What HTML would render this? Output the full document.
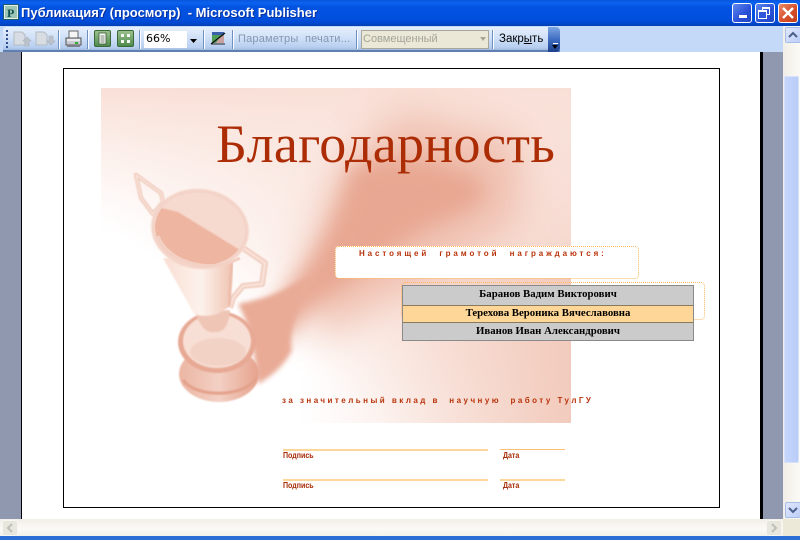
<!DOCTYPE html>
<html><head><meta charset="utf-8"><style>
html,body{margin:0;padding:0;width:800px;height:540px;overflow:hidden;background:#fff}
div,span{position:absolute;white-space:nowrap}
body{font-family:"Liberation Sans",sans-serif}
.sep{width:1px;height:19px;top:30px;background:#6f8fc0;border-right:1px solid #fff}
.sp{font-family:"Liberation Sans",sans-serif;font-weight:bold;color:#b8330a;font-size:8px}
.row{left:403px;width:290px;text-align:center;font:bold 10.8px "Liberation Serif",serif;color:#000}
.ln{background:#fdd699;height:2px}
.lb{font:bold 8px "Liberation Sans",sans-serif;color:#a62a05;transform-origin:0 0;transform:scaleX(.88)}
</style></head><body>
<!-- title bar -->
<div style="left:0;top:0;width:800px;height:26px;background:linear-gradient(#0a56dc 0,#0a63f0 3px,#0352e0 7px,#0150e0 18px,#0148d0 23px,#0240b0 26px)"></div>
<div style="left:4px;top:5px;width:12px;height:12px;background:#9cc4b4;border:1px solid #e4efe8;outline:1px solid #1d5a70"></div>
<div style="left:7px;top:6px;font:bold 12px 'Liberation Serif',serif;color:#11504f">P</div>
<div style="left:21px;top:5px;font:bold 13px 'Liberation Sans','DejaVu Sans',sans-serif;color:#fff;text-shadow:1px 1px #0a2f9a;white-space:pre">Публикация7 (просмотр)  - Microsoft Publisher</div>
<!-- window buttons -->
<div style="left:732px;top:3px;width:18px;height:18px;border:1px solid #fff;border-radius:3px;background:linear-gradient(135deg,#5f88ee,#2a50d8 60%,#2246c0)"></div>
<div style="left:739px;top:15px;width:8px;height:3px;background:#fff"></div>
<div style="left:755px;top:3px;width:18px;height:18px;border:1px solid #fff;border-radius:3px;background:linear-gradient(135deg,#5f88ee,#2a50d8 60%,#2246c0)"></div>
<div style="left:762px;top:7px;width:6px;height:5px;border:1px solid #fff;border-top-width:2px"></div>
<div style="left:758px;top:10px;width:7px;height:6px;border:1px solid #fff;border-top-width:2px;background:#2f56da"></div>
<div style="left:778px;top:3px;width:18px;height:18px;border:1px solid #fff;border-radius:3px;background:linear-gradient(135deg,#eb8a66,#d8502c 55%,#c04018)"></div>
<svg style="position:absolute;left:778px;top:3px" width="20" height="20"><path d="M5 5L15 15M15 5L5 15" stroke="#fff" stroke-width="2.4"/></svg>
<!-- toolbar band -->
<div style="left:0;top:26px;width:783px;height:26px;background:#c3d9f7"></div>
<div style="left:3px;top:27px;width:557px;height:25px;border-radius:3px 4px 4px 3px;background:linear-gradient(#e6effc,#d2e2f8 40%,#b8cff0 80%,#8fadd8)"></div>
<div style="left:3px;top:50px;width:557px;height:2px;background:#5f7fb0"></div>
<div style="left:6px;top:30px;width:2px;height:2px;background:#2f4f90;box-shadow:0 4px #2f4f90,0 8px #2f4f90,0 12px #2f4f90,0 16px #2f4f90"></div>
<!-- preview pages disabled -->
<svg style="position:absolute;left:12px;top:29px" width="50" height="20">
<path d="M2 3h8l3 3v10H2z" fill="#d8dde4" stroke="#b4bac4"/><path d="M13 17v-5h-2l4-4 4 4h-2v5z" fill="#bcc3cc" stroke="#a8afb8" stroke-width=".6"/>
<path d="M24 3h8l3 3v10H24z" fill="#d8dde4" stroke="#b4bac4"/><path d="M37 7v5h-2l4 4 4-4h-2V7z" fill="#bcc3cc" stroke="#a8afb8" stroke-width=".6"/>
</svg>
<div class="sep" style="left:58px"></div>
<!-- print -->
<svg style="position:absolute;left:64px;top:29px" width="20" height="20">
<path d="M5 2h9v7H5z" fill="#f5f5f5" stroke="#666"/><path d="M2 9h15v7H2z" fill="#c8ccd2" stroke="#555"/><path d="M3 10h13v2H3z" fill="#e8eaee"/><rect x="11" y="13" width="3" height="2" fill="#2cb02c"/><path d="M3 16h13v2H3z" fill="#7c8088"/>
</svg>
<div class="sep" style="left:87px"></div>
<!-- one page / multi page -->
<div style="left:94px;top:30px;width:15px;height:15px;border:1px solid #3a6a3a;border-radius:2px;background:linear-gradient(#9cc08c,#4e8a4e)"></div>
<svg style="position:absolute;left:94px;top:30px" width="17" height="17"><path d="M5 3h7v11H5z" fill="#f4f7f2" stroke="#3d5a3d" stroke-width=".8"/><path d="M6.500 6h4M6.500 8h4M6.500 10h4M6.500 12h4" stroke="#5a6a5a" stroke-width=".8"/></svg>
<div style="left:117px;top:30px;width:15px;height:15px;border:1px solid #3a6a3a;border-radius:2px;background:linear-gradient(#9cc08c,#4e8a4e)"></div>
<svg style="position:absolute;left:117px;top:30px" width="17" height="17"><rect x="4" y="4" width="3" height="3" fill="#f4f7f2"/><rect x="10" y="4" width="3" height="3" fill="#f4f7f2"/><rect x="4" y="10" width="3" height="3" fill="#f4f7f2"/><rect x="10" y="10" width="3" height="3" fill="#f4f7f2"/></svg>
<div class="sep" style="left:139px"></div>
<!-- zoom combo -->
<div style="left:144px;top:31px;width:56px;height:17px;background:#fff"></div>
<div style="left:187px;top:31px;width:13px;height:17px;background:linear-gradient(#dfeafa,#b8cff2)"></div>
<svg style="position:absolute;left:187px;top:31px" width="13" height="17"><path d="M3 8h7l-3.500 4z" fill="#000"/></svg>
<div style="left:146px;top:31px;line-height:16px;color:#000;font-family:'DejaVu Sans',sans-serif;font-size:11px">66%</div>
<div class="sep" style="left:203px"></div>
<svg style="position:absolute;left:210px;top:30px" width="16" height="16"><rect x="2" y="2" width="12" height="3" fill="#3b5fa8"/><path d="M2 5h12v2L6 13H2z" fill="#4f9e58"/><path d="M9 8l5-3v8H6z" fill="#c9a0a0"/><path d="M1 14L15 3" stroke="#111" stroke-width="1.300"/><path d="M1 14h14" stroke="#222"/></svg>
<div class="sep" style="left:232px"></div>
<div style="left:238px;top:33px;font-size:11px;color:#8497b2;letter-spacing:.2px;white-space:pre">Параметры  печати...</div>
<div class="sep" style="left:356px"></div>
<!-- disabled combo -->
<div style="left:361px;top:30px;width:126px;height:17px;background:#ebe8d8;border:1px solid #a9a79a"></div>
<div style="left:363px;top:33px;font-size:11px;color:#a4a496">Совмещенный</div>
<svg style="position:absolute;left:478px;top:34px" width="10" height="10"><path d="M2 3h6l-3 4z" fill="#a6a698"/></svg>
<div class="sep" style="left:492px"></div>
<div style="left:499px;top:33px;font-size:11.500px;color:#000">Закр<span style="position:static;text-decoration:underline">ы</span>ть</div>
<!-- chevron -->
<div style="left:548px;top:27px;width:12px;height:25px;border-radius:0 4px 4px 0;background:linear-gradient(#7ea4e4,#3e6cc0 50%,#1c3f8e)"></div>
<div style="left:553px;top:43px;width:5px;height:1px;background:#fff"></div>
<svg style="position:absolute;left:551px;top:44px" width="8" height="6"><path d="M1 1h6L4 5z" fill="#000"/></svg>
<!-- workspace -->
<div style="left:0;top:52px;width:783px;height:467px;background:#8f98ae"></div>
<div style="left:21px;top:52px;width:1px;height:467px;background:#000"></div>
<div style="left:22px;top:52px;width:738px;height:467px;background:#fff"></div>
<div style="left:760px;top:52px;width:3px;height:467px;background:#000"></div>
<!-- page border -->
<div style="left:63px;top:68px;width:655px;height:438px;border:1px solid #000"></div>
<!-- art -->
<svg style="position:absolute;left:101px;top:88px" width="470" height="335" viewBox="101 88 470 335">
<defs>
<linearGradient id="bg" x1="0" y1="1" x2="1" y2="0"><stop offset="0" stop-color="#fff"/><stop offset=".3" stop-color="#fff"/><stop offset=".55" stop-color="#fae6df"/><stop offset="1" stop-color="#f2c8ba"/></linearGradient>
<linearGradient id="tl" x1="0" y1="0" x2="0" y2="1"><stop offset="0" stop-color="#f9e0d7"/><stop offset="1" stop-color="#fff" stop-opacity="0"/></linearGradient>
<linearGradient id="br" x1="0" y1="0" x2="1" y2="0"><stop offset="0" stop-color="#f6d9ce" stop-opacity="0"/><stop offset="1" stop-color="#f2cbbd"/></linearGradient>
<linearGradient id="cone" x1="0" y1="0" x2="1" y2="0"><stop offset="0" stop-color="#f9ddd2"/><stop offset=".55" stop-color="#fdf2ec"/><stop offset="1" stop-color="#f0c4b3"/></linearGradient>
<linearGradient id="base2" x1="0" y1="0" x2="1" y2="0"><stop offset="0" stop-color="#ecb5a2"/><stop offset=".5" stop-color="#f3d0c4"/><stop offset="1" stop-color="#e5a28c"/></linearGradient>
<filter id="b20" x="-50%" y="-50%" width="200%" height="200%"><feGaussianBlur stdDeviation="20"/></filter>
<filter id="b9" x="-30%" y="-30%" width="160%" height="160%"><feGaussianBlur stdDeviation="10"/></filter>
<filter id="b3" x="-30%" y="-30%" width="160%" height="160%"><feGaussianBlur stdDeviation="2.500"/></filter>
<filter id="b1" x="-20%" y="-20%" width="140%" height="140%"><feGaussianBlur stdDeviation=".8"/></filter>
<clipPath id="ac"><rect x="101" y="88" width="470" height="335"/></clipPath>
<clipPath id="cup"><ellipse cx="200" cy="229" rx="45" ry="36" transform="rotate(8 200 229)"/></clipPath>
</defs>
<g clip-path="url(#ac)">
<rect x="101" y="88" width="470" height="335" fill="url(#bg)"/>
<rect x="101" y="88" width="470" height="160" fill="url(#tl)"/>
<rect x="300" y="250" width="271" height="173" fill="url(#br)"/>
<!-- shadow halo -->
<path d="M300 290L340 170 400 110 520 140 520 220 420 280 320 340Z" fill="#eeb9a7" filter="url(#b20)" opacity=".85"/>
<!-- shadow main band -->
<path d="M310 262C328 235 342 205 350 170 375 155 425 158 452 168 470 175 485 182 485 190 480 205 465 212 440 222 413 233 395 248 377 262L340 288C322 300 312 308 303 318 294 328 290 335 290 345L270 310Z" fill="#e8a792" filter="url(#b9)"/>
<!-- shadow base -->
<path d="M238 304C255 300 270 297 287 288L312 275C300 300 288 332 292 350 285 365 272 376 258 384 254 350 250 325 238 304Z" fill="#e9ab96" filter="url(#b3)"/>
<!-- handles -->
<g filter="url(#b1)">
<path d="M136 175L161 193 163 202 153 214 141 198Z" fill="none" stroke="#ecbfad" stroke-width="4" stroke-linejoin="round"/>
<path d="M136 175L161 193 163 202 153 214 141 198Z" fill="none" stroke="#f9e4dc" stroke-width="1.800" stroke-linejoin="round"/>
<path d="M243 248L265 263 262 284 243 286 233 298 230 308" fill="none" stroke="#ecbfad" stroke-width="5.500" stroke-linejoin="round"/>
<path d="M243 248L265 263 262 284 243 286 233 298 230 308" fill="none" stroke="#f9e2d9" stroke-width="3" stroke-linejoin="round"/>
</g>
<!-- base -->
<ellipse cx="219" cy="374" rx="40" ry="28" fill="url(#base2)" filter="url(#b1)"/>
<path d="M183 380C195 398 245 398 256 378" fill="none" stroke="#e4a18b" stroke-width="3" filter="url(#b1)"/>
<ellipse cx="217" cy="342" rx="39" ry="31" fill="#e7a994" filter="url(#b1)"/>
<ellipse cx="217" cy="341" rx="34" ry="27" fill="#f8dfd5" filter="url(#b1)"/>
<ellipse cx="218" cy="352" rx="28" ry="14" fill="#f3d2c6" filter="url(#b1)"/>
<!-- stem -->
<path d="M195 312C200 325 205 334 216 332 226 332 229 322 230 310Z" fill="#efc5b5" filter="url(#b1)"/>
<!-- cone -->
<path d="M163 258L194 314C206 318 220 316 229 306L232 262Z" fill="url(#cone)" filter="url(#b1)"/>
<path d="M229 306L232 262" stroke="#ecbba8" stroke-width="3" filter="url(#b1)"/>
<!-- cup -->
<ellipse cx="200" cy="229" rx="49" ry="40" fill="#f4d4c8" filter="url(#b1)" transform="rotate(8 200 229)"/>
<g clip-path="url(#cup)">
<rect x="150" y="185" width="100" height="90" fill="#f7dacf"/>
<path d="M150 205L178 212 240 250 230 275 150 275Z" fill="#eeb5a1" filter="url(#b1)"/>
</g>
<path d="M158 236C168 262 210 275 240 258" fill="none" stroke="#f3d0c4" stroke-width="3"/>
</g>
</svg>
<!-- title -->
<div style="left:216px;top:112px;font:54px 'Liberation Serif',serif;color:#ac2d05;line-height:64px;letter-spacing:.3px">Благодарность</div>
<!-- text frame 1 -->
<div style="left:335px;top:246px;width:303px;height:32px;background:#fff;border-radius:4px"></div>
<div style="left:335px;top:246px;width:302px;height:31px;border:1px dotted #fbb860;border-radius:4px"></div>
<div class="sp" style="left:359px;top:249px;letter-spacing:2.900px;white-space:pre">Настоящей  грамотой  награждаются:</div>
<!-- text frame 2 -->
<div style="left:401px;top:282px;width:302px;height:36px;border:1px dotted #fbb860;border-radius:4px"></div>
<!-- names table -->
<div style="left:402px;top:285px;width:292px;height:56px;background:#cbcbcb"></div>
<div style="left:402px;top:305px;width:292px;height:17px;background:#fed798"></div>
<div style="left:402px;top:285px;width:291px;height:1px;background:#8a8a8a"></div>
<div style="left:402px;top:305px;width:291px;height:1px;background:#8a7a5c"></div>
<div style="left:402px;top:322px;width:291px;height:1px;background:#8a7a5c"></div>
<div style="left:402px;top:340px;width:292px;height:1px;background:#8a8a8a"></div>
<div style="left:402px;top:285px;width:1px;height:56px;background:#8a8a8a"></div>
<div style="left:693px;top:285px;width:1px;height:56px;background:#8a8a8a"></div>
<div class="row" style="top:288px">Баранов Вадим Викторович</div>
<div class="row" style="top:307px">Терехова Вероника Вячеславовна</div>
<div class="row" style="top:325px">Иванов Иван Александрович</div>
<!-- award line -->
<div class="sp" style="left:282px;top:396px;letter-spacing:2.470px;white-space:pre">за значительный вклад в  научную  работу ТулГУ</div>
<!-- signatures -->
<div class="ln" style="left:283px;top:449px;width:205px"></div>
<div class="ln" style="left:500px;top:449px;width:65px;background:#f8c078;height:1px"></div>
<div class="ln" style="left:283px;top:479px;width:205px"></div>
<div class="ln" style="left:500px;top:479px;width:65px"></div>
<div class="lb" style="left:283px;top:451px">Подпись</div>
<div class="lb" style="left:503px;top:451px">Дата</div>
<div class="lb" style="left:283px;top:481px">Подпись</div>
<div class="lb" style="left:503px;top:481px">Дата</div>
<!-- vertical scrollbar -->
<div style="left:783px;top:26px;width:17px;height:493px;background:linear-gradient(90deg,#f0eee6,#fbfaf6)"></div>
<div style="left:785px;top:27px;width:14px;height:14px;background:linear-gradient(135deg,#e0e8fc,#bccdf8);border:1px solid #fff;outline:1px solid #a6bde8;outline-offset:-1px;border-radius:2px"></div>
<svg style="position:absolute;left:785px;top:27px" width="16" height="16"><path d="M4 10L8 6l4 4" fill="none" stroke="#4a5f8a" stroke-width="2"/></svg>
<div style="left:784px;top:76px;width:15px;height:387px;background:linear-gradient(90deg,#c6d6fb,#b9ccf8);border-radius:2px;box-shadow:inset 0 0 0 1px #d6e1fb"></div>
<div style="left:785px;top:502px;width:14px;height:14px;background:linear-gradient(135deg,#e0e8fc,#bccdf8);border:1px solid #fff;outline:1px solid #a6bde8;outline-offset:-1px;border-radius:2px"></div>
<svg style="position:absolute;left:785px;top:502px" width="16" height="16"><path d="M4 6l4 4 4-4" fill="none" stroke="#4a5f8a" stroke-width="2"/></svg>
<!-- horizontal scrollbar -->
<div style="left:0;top:519px;width:783px;height:17px;background:linear-gradient(#f0eee6,#fbfaf6 60%,#f3f1ea)"></div>
<div style="left:783px;top:519px;width:17px;height:17px;background:#ece9d8"></div>
<div style="left:2px;top:520px;width:14px;height:14px;background:#e8e7dd;border:1px solid #f6f5ef;border-radius:2px"></div>
<svg style="position:absolute;left:2px;top:520px" width="16" height="16"><path d="M10 4L6 8l4 4" fill="none" stroke="#c0c0b6" stroke-width="2"/></svg>
<div style="left:766px;top:520px;width:14px;height:14px;background:#e8e7dd;border:1px solid #f6f5ef;border-radius:2px"></div>
<svg style="position:absolute;left:766px;top:520px" width="16" height="16"><path d="M6 4l4 4-4 4" fill="none" stroke="#c0c0b6" stroke-width="2"/></svg>
<!-- bottom edge -->
<div style="left:0;top:536px;width:800px;height:4px;background:#2b6fd6"></div>
</body></html>
